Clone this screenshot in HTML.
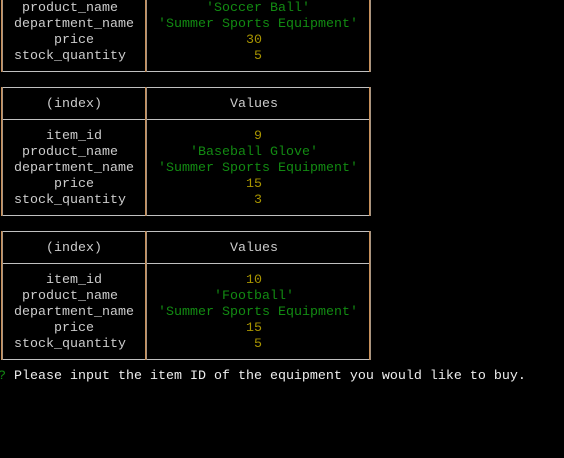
<!DOCTYPE html>
<html><head><meta charset="utf-8"><style>
html,body{margin:0;padding:0;background:#000;width:564px;height:458px;overflow:hidden;position:relative}
.t{position:absolute;font-family:"Liberation Mono","DejaVu Sans Mono",monospace;font-size:13.333px;line-height:16px;height:16px;white-space:pre;color:#cccccc;margin-top:2px}
.g{color:#128a12}.y{color:#a89400}.w{color:#eeeeee}
.h{position:absolute;left:1px;width:370px;height:1px;background:#c0c0c0}
.vo{position:absolute;width:1px;background:#c8905a}
.vb{position:absolute;width:1px;background:#a89480}
</style></head><body>
<div class="h" style="top:71px"></div>
<div class="vo" style="left:1px;top:0;height:72px"></div><div class="vb" style="left:2px;top:0;height:72px"></div>
<div class="vo" style="left:145px;top:0;height:72px"></div><div class="vb" style="left:146px;top:0;height:72px"></div>
<div class="vo" style="left:369px;top:0;height:72px"></div><div class="vb" style="left:370px;top:0;height:72px"></div>
<div class="h" style="top:87px"></div><div class="h" style="top:119px"></div><div class="h" style="top:215px"></div>
<div class="vo" style="left:1px;top:87px;height:129px"></div><div class="vb" style="left:2px;top:87px;height:129px"></div>
<div class="vo" style="left:145px;top:87px;height:129px"></div><div class="vb" style="left:146px;top:87px;height:129px"></div>
<div class="vo" style="left:369px;top:87px;height:129px"></div><div class="vb" style="left:370px;top:87px;height:129px"></div>
<div class="h" style="top:231px"></div><div class="h" style="top:263px"></div><div class="h" style="top:359px"></div>
<div class="vo" style="left:1px;top:231px;height:129px"></div><div class="vb" style="left:2px;top:231px;height:129px"></div>
<div class="vo" style="left:145px;top:231px;height:129px"></div><div class="vb" style="left:146px;top:231px;height:129px"></div>
<div class="vo" style="left:369px;top:231px;height:129px"></div><div class="vb" style="left:370px;top:231px;height:129px"></div>

<div class="t" style="left:22px;top:-1px">product_name</div><div class="t g" style="left:206px;top:-1px">'Soccer Ball'</div>
<div class="t" style="left:14px;top:15px">department_name</div><div class="t g" style="left:158px;top:15px">'Summer Sports Equipment'</div>
<div class="t" style="left:54px;top:31px">price</div><div class="t y" style="left:246px;top:31px">30</div>
<div class="t" style="left:14px;top:47px">stock_quantity</div><div class="t y" style="left:254px;top:47px">5</div>

<div class="t" style="left:46px;top:95px">(index)</div><div class="t" style="left:230px;top:95px">Values</div>
<div class="t" style="left:46px;top:127px">item_id</div><div class="t y" style="left:254px;top:127px">9</div>
<div class="t" style="left:22px;top:143px">product_name</div><div class="t g" style="left:190px;top:143px">'Baseball Glove'</div>
<div class="t" style="left:14px;top:159px">department_name</div><div class="t g" style="left:158px;top:159px">'Summer Sports Equipment'</div>
<div class="t" style="left:54px;top:175px">price</div><div class="t y" style="left:246px;top:175px">15</div>
<div class="t" style="left:14px;top:191px">stock_quantity</div><div class="t y" style="left:254px;top:191px">3</div>

<div class="t" style="left:46px;top:239px">(index)</div><div class="t" style="left:230px;top:239px">Values</div>
<div class="t" style="left:46px;top:271px">item_id</div><div class="t y" style="left:246px;top:271px">10</div>
<div class="t" style="left:22px;top:287px">product_name</div><div class="t g" style="left:214px;top:287px">'Football'</div>
<div class="t" style="left:14px;top:303px">department_name</div><div class="t g" style="left:158px;top:303px">'Summer Sports Equipment'</div>
<div class="t" style="left:54px;top:319px">price</div><div class="t y" style="left:246px;top:319px">15</div>
<div class="t" style="left:14px;top:335px">stock_quantity</div><div class="t y" style="left:254px;top:335px">5</div>

<div class="t g" style="left:-2px;top:367px">?</div>
<div class="t w" style="left:14px;top:367px">Please input the item ID of the equipment you would like to buy.</div>
</body></html>
